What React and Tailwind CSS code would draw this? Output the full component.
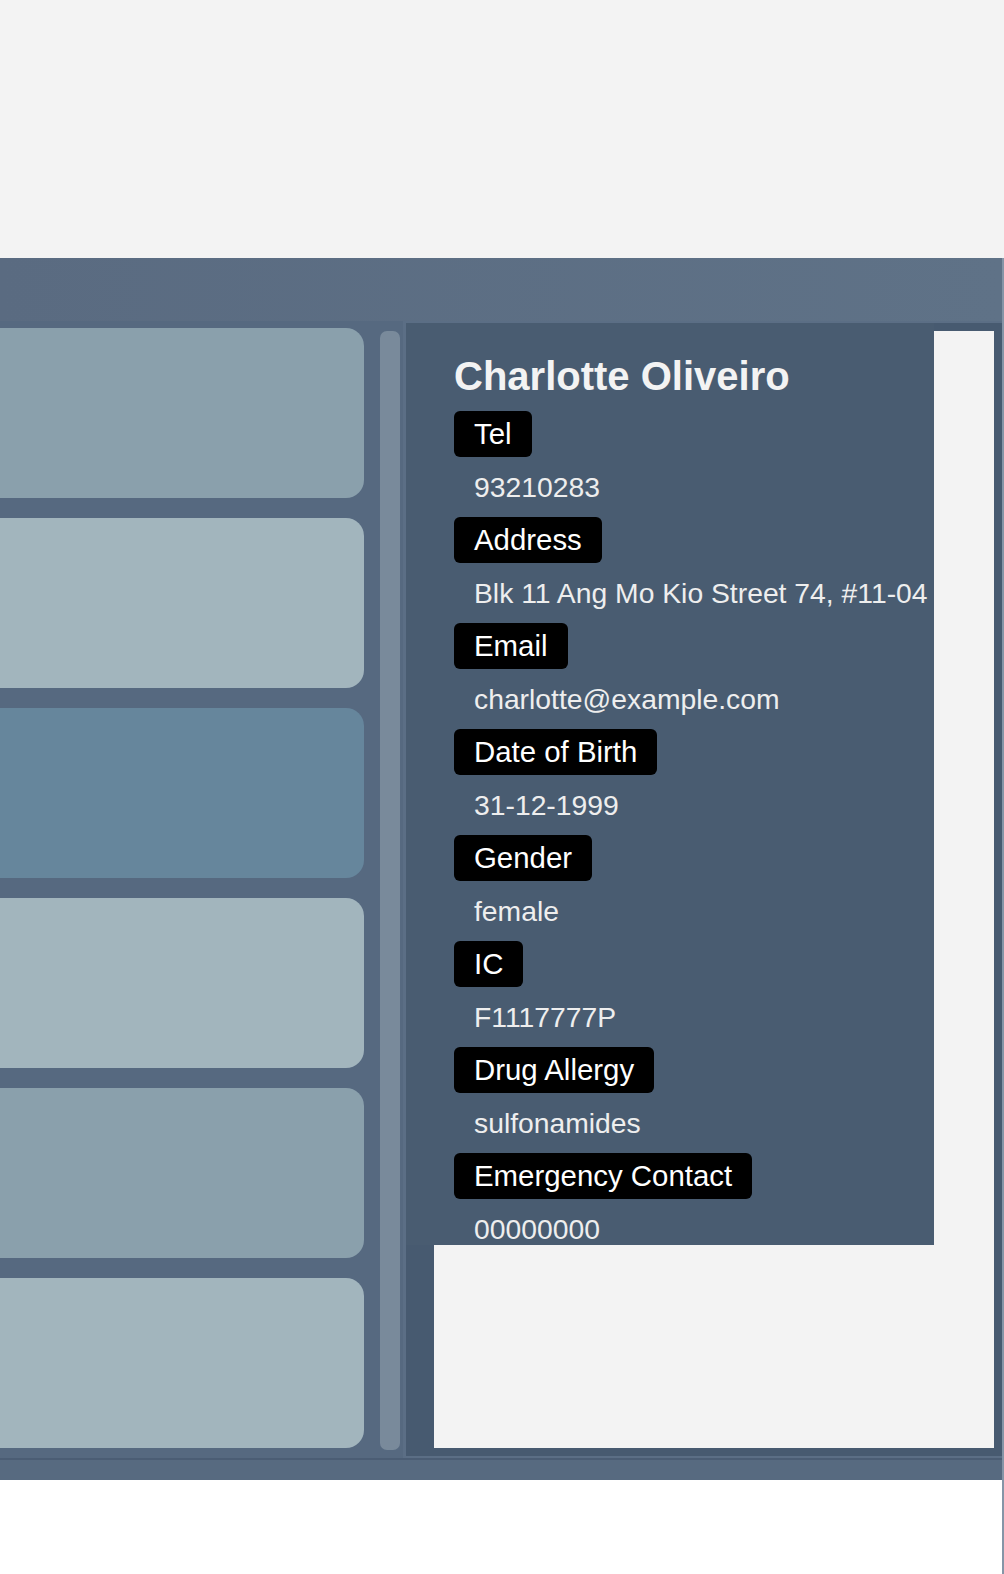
// Patient detail view: card list on the left, profile panel on the right

const cards = [
  "bg-[#8aa0ac]",
  "bg-[#a2b5bd]",
  "bg-[#66869c]",
  "bg-[#a2b5bd]",
  "bg-[#8aa0ac]",
  "bg-[#a2b5bd]",
];

const fields = [
  { label: "Tel", value: "93210283" },
  { label: "Address", value: "Blk 11 Ang Mo Kio Street 74, #11-04" },
  { label: "Email", value: "charlotte@example.com" },
  { label: "Date of Birth", value: "31-12-1999" },
  { label: "Gender", value: "female" },
  { label: "IC", value: "F1117777P" },
  { label: "Drug Allergy", value: "sulfonamides" },
  { label: "Emergency Contact", value: "00000000" },
];

const PatientInfo = () => (
  <div className="col-start-1 row-start-1 z-10 flex h-[922px] w-[528px] flex-col self-start bg-[#495c71] pl-[48px] pt-[30px]">
    <h2 className="mb-[-2px] text-[40px] font-bold leading-[46px] text-[#f3f3f3]">
      Charlotte Oliveiro
    </h2>
    {fields.map((f) => (
      <div key={f.label} className="mt-[14px] flex flex-col items-start">
        <span className="rounded-[6px] bg-black px-5 py-[6px] text-[29.4px] leading-[34px] text-white">
          {f.label}
        </span>
        <span className="mt-[14px] whitespace-nowrap pl-5 text-[28.3px] leading-[32px] text-[#eeeeee]">
          {f.value}
        </span>
      </div>
    ))}
  </div>
);

export default function App() {
  return (
    <div className="min-h-[1574px] bg-white font-['Liberation_Sans',Arial,sans-serif]">
      <div className="h-[258px] bg-[#f3f3f3]" />

      <div className="flex h-[1316px]">
        <div className="flex w-[1002px] flex-col">
          {/* Header */}
          <div className="h-[63px] bg-gradient-to-r from-[#5a6b81] to-[#5f7287]" />

          {/* Body */}
          <div className="flex h-[1137px] bg-[#566980]">
            {/* Card list */}
            <div className="flex w-[364px] flex-col gap-[20px] pt-[7px]">
              {cards.map((c, i) => (
                <div key={i} className={`h-[170px] rounded-r-[18px] ${c}`} />
              ))}
            </div>

            {/* Scrollbar */}
            <div className="ml-[16px] mt-[10px] mb-[8px] w-[20px] rounded-[7px] bg-[#798a9b]" />

            {/* Profile panel */}
            <div className="ml-[3px] flex-1 border-y-2 border-l-[3px] border-[#5b6e85] bg-[#475a70]">
              <div className="grid h-full">
                <div className="col-start-1 row-start-1 mb-[8px] ml-[28px] mr-[8px] mt-[8px] bg-[#f3f3f3]" />
                <PatientInfo />
              </div>
            </div>
          </div>

          <div className="h-[2px] bg-[#4b5d74]" />
          <div className="h-[20px] bg-[#576a80]" />
        </div>
        <div className="w-[2px] bg-[#8595a7]" />
      </div>
    </div>
  );
}
